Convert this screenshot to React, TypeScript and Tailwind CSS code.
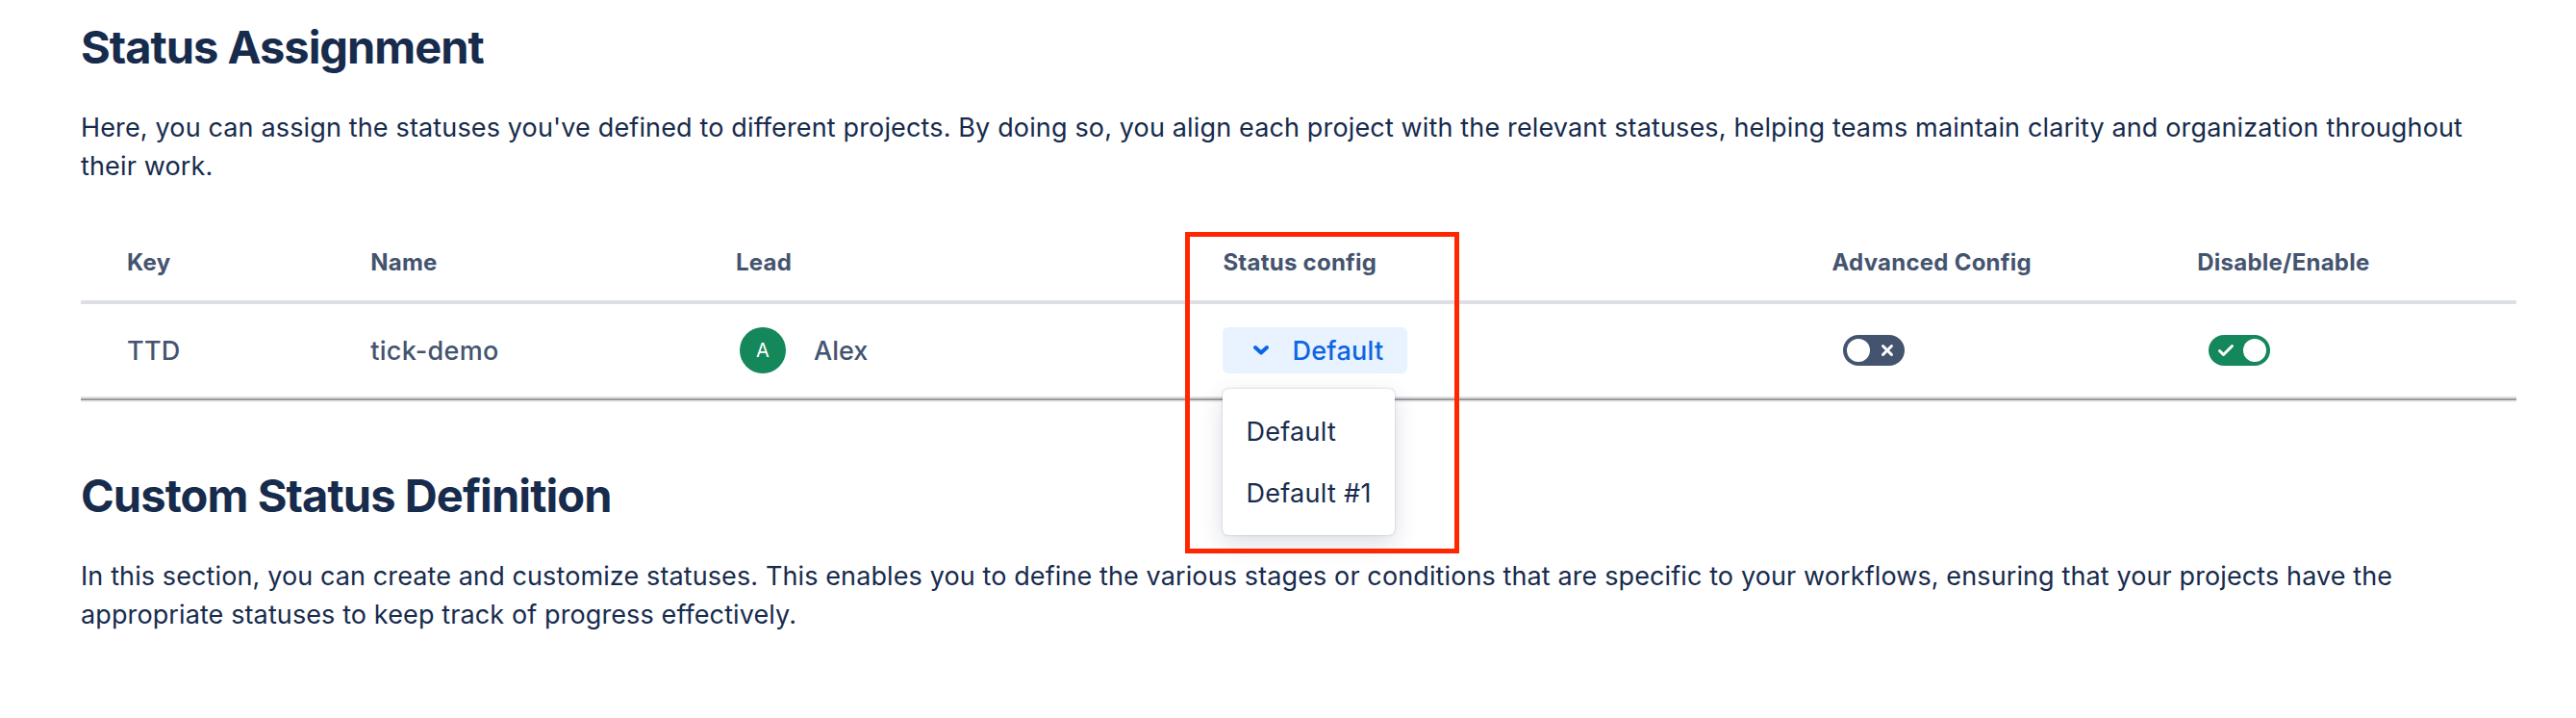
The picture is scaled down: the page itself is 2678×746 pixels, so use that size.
import React, { useState } from 'react';

const projects = [
  { key: 'TTD', name: 'tick-demo', lead: 'Alex', config: 'Default', advanced: false, enabled: true },
];

const statusConfigs = ['Default', 'Default #1'];

function Toggle({ defaultOn, label }: { defaultOn: boolean; label: string }) {
  const [on, setOn] = useState(defaultOn);

  return (
    <button
      role="switch"
      aria-checked={on}
      aria-label={label}
      onClick={() => setOn(!on)}
      className={`flex h-8 w-16 items-center rounded-full px-1 ml-3 ${on ? 'flex-row-reverse bg-[#14875B]' : 'bg-[#44546F]'}`}
    >
      <span className="h-6 w-6 shrink-0 rounded-full bg-white" />
      <span className={`flex flex-1 ${on ? 'justify-start pl-1' : 'justify-end pr-1'}`}>
        {on ? (
          <svg width="20" height="20" viewBox="0 0 20 20" fill="none" stroke="white" strokeWidth="3" strokeLinecap="round" strokeLinejoin="round">
            <path d="M3.5 10.5L7.5 14.5L16.5 5.5" />
          </svg>
        ) : (
          <svg width="20" height="20" viewBox="0 0 20 20" fill="none" stroke="white" strokeWidth="3" strokeLinecap="round">
            <path d="M5.5 5.5L14.5 14.5M14.5 5.5L5.5 14.5" />
          </svg>
        )}
      </span>
    </button>
  );
}

function StatusSelect({ initial }: { initial: string }) {
  const [open, setOpen] = useState(true);
  const [value, setValue] = useState(initial);

  return (
    <div className="relative w-fit">
      <button
        onClick={() => setOpen(!open)}
        className="flex h-12 w-48 items-center rounded-md bg-[#E9F2FF] pl-8 font-medium text-[#0C66E4]"
      >
        <svg width="16" height="12" viewBox="0 0 16 12" fill="none" stroke="currentColor" strokeWidth="4" strokeLinecap="round" strokeLinejoin="round" className="mr-6">
          <path d="M2 3L8 8.5L14 3" />
        </svg>
        <span className="pt-0.5">{value}</span>
      </button>
      {open && (
        <div className="absolute left-0 top-16 z-10 w-[179px] rounded-md bg-white py-3 font-normal text-[#172B4D] shadow-[0_8px_24px_rgba(9,30,66,0.15),0_0_2px_rgba(9,30,66,0.31)]">
          {statusConfigs.map((item) => (
            <button key={item} onClick={() => { setValue(item); setOpen(false); }} className="flex h-16 w-full items-center whitespace-nowrap pl-6 pt-0.5">
              {item}
            </button>
          ))}
        </div>
      )}
    </div>
  );
}

export default function App() {
  return (
    <div className="h-[746px] overflow-hidden bg-white pl-[84px] pr-[62px] pt-[21px] font-['Inter',sans-serif] text-[27px] leading-10 text-[#172B4D]">
      <h1 className="text-[47px] font-bold leading-14 tracking-[-1px]">Status Assignment</h1>
      <p className="mt-9 whitespace-nowrap tracking-[0.145px]">
        Here, you can assign the statuses you've defined to different projects. By doing so, you align each project with the relevant statuses, helping teams maintain clarity and organization throughout
        <br />
        their work.
      </p>

      <section className="relative mt-[39px] text-[#44546F]">
        <div className="grid h-[84px] grid-cols-[10fr_15fr_20fr_25fr_15fr_15fr] items-center border-b-4 border-[#DCDFE4] pt-0.5 text-2xl font-bold tracking-[0.25px] *:pl-12">
          <div>Key</div>
          <div>Name</div>
          <div>Lead</div>
          <div>Status config</div>
          <div>Advanced Config</div>
          <div>Disable/Enable</div>
        </div>
        {projects.map((project) => (
          <div key={project.key} className="grid h-[98px] grid-cols-[10fr_15fr_20fr_25fr_15fr_15fr] items-center border-b-2 border-[#DCDFE4] font-medium tracking-[0.3px] *:pl-12">
            <div className="pt-0.5">{project.key}</div>
            <div className="pt-0.5">{project.name}</div>
            <div className="flex items-center">
              <span className="ml-1 mr-[29px] flex h-12 w-12 items-center justify-center rounded-full bg-[#14875B] text-xl font-normal text-white">
                {project.lead[0]}
              </span>
              <span className="pt-0.5 tracking-normal">{project.lead}</span>
            </div>
            <div><StatusSelect initial={project.config} /></div>
            <div><Toggle defaultOn={project.advanced} label="Advanced config" /></div>
            <div><Toggle defaultOn={project.enabled} label="Enable project" /></div>
          </div>
        ))}
        <div className="h-1 border-b-2 border-t-2 border-b-[#EEEEEE] border-t-[#9A9A9A]" />

        {/* Highlight around the status config column */}
        <div className="pointer-events-none absolute left-[1148px] top-[9px] z-20 h-[334px] w-[285px] border-5 border-[#FF2600]" />
      </section>

      <h1 className="mt-[69px] text-[47px] font-bold leading-14 tracking-[-0.9px]">Custom Status Definition</h1>
      <p className="mt-9 whitespace-nowrap tracking-[0.11px]">
        In this section, you can create and customize statuses. This enables you to define the various stages or conditions that are specific to your workflows, ensuring that your projects have the
        <br />
        appropriate statuses to keep track of progress effectively.
      </p>
    </div>
  );
}
